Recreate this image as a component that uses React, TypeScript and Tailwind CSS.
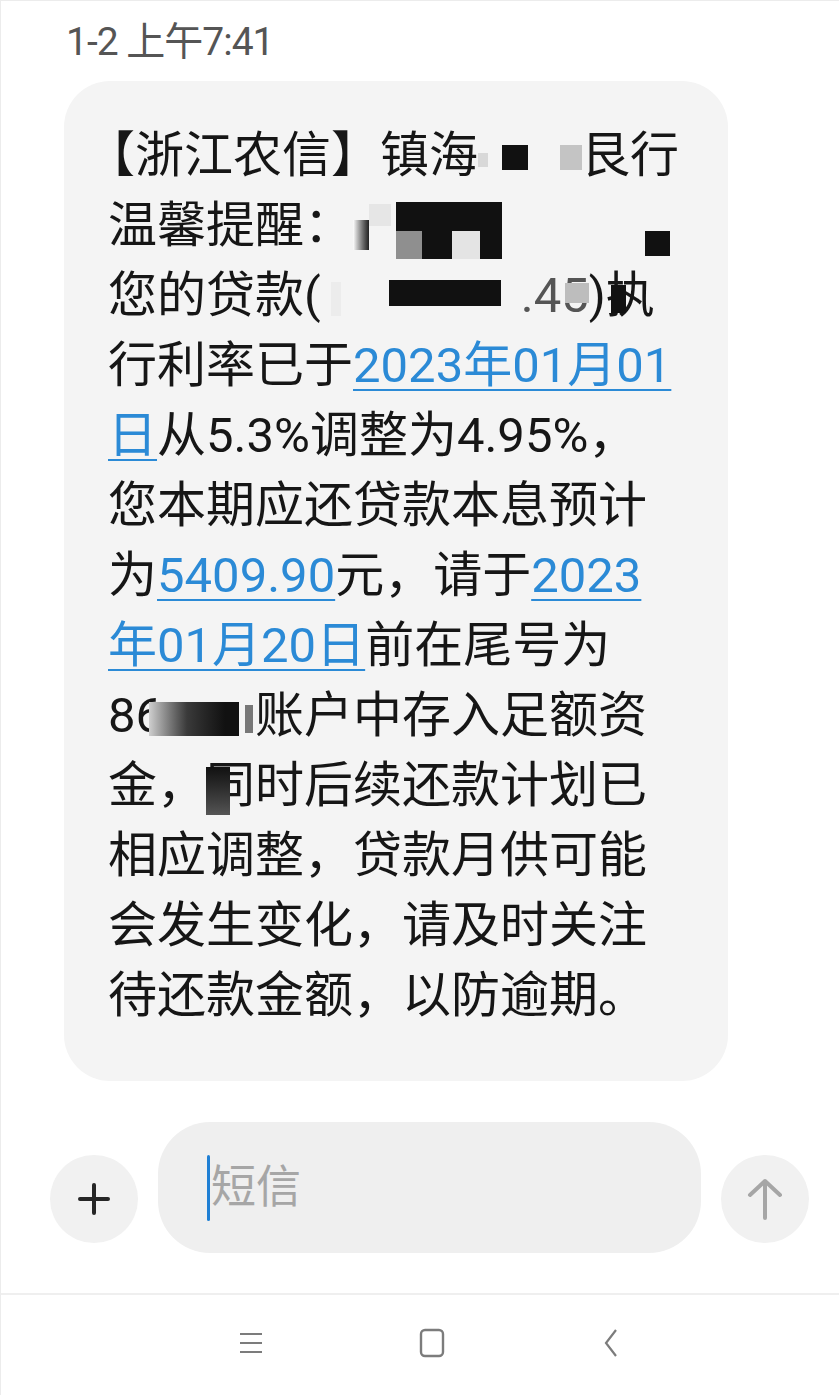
import React from 'react';

const cjk = { fontFamily: "Roboto, 'Noto Sans CJK SC', sans-serif" };

// blue underlined date / amount links in the SMS
const Link = ({ children }: { children: React.ReactNode }) => (
  <span className="text-[#2b8ad6] underline decoration-[#2b8ad6] decoration-2 underline-offset-[7px]">{children}</span>
);

// mosaic piece laid over a glyph
const Cover = ({ className }: { className: string }) => <span className={`absolute ${className}`} />;

const App: React.FC = () => {
  return (
    <div className="w-[839px] h-[1395px] bg-white flex flex-col border-l border-t border-[#ececec] overflow-hidden" style={cjk}>
      {/* timestamp */}
      <div className="pl-[65px] pt-[12px] h-[80px] text-[39px] text-[#555] tracking-[-1px]">1-2 上午7:41</div>

      {/* message bubble */}
      <div className="mx-[63px] w-[664px] rounded-[46px] bg-[#f4f4f4] pl-[44px] pt-[40px] pb-[50px] text-[#161616] text-[49px] leading-[70px]">
        <div className="whitespace-nowrap -ml-[22px]">
          【浙江农信】镇海
          <span className="inline-flex items-start w-[103px] h-[28px] align-middle">
            <span className="shrink-0 w-[10px] h-[14px] bg-[#d8d8d8] mt-[8px]" />
            <span className="shrink-0 w-[26px] h-[25px] bg-[#111] ml-[14px]" />
            <span className="shrink-0 w-[22px] h-[25px] bg-[#c4c4c4] ml-[32px]" />
          </span>
          艮行
        </div>
        <div className="whitespace-nowrap">
          温馨提醒：
          <span className="inline-flex w-[320px] h-[57px] align-[-8px]">
            <span className="shrink-0 w-[16px] h-[30px] mt-[18px] bg-gradient-to-r from-white to-[#222]" />
            <span className="shrink-0 w-[22px] h-[22px] mt-[2px] bg-[#e6e6e6]" />
            <span className="shrink-0 w-[106px] h-[57px] ml-[5px] bg-[#111] flex items-end">
              <span className="w-[26px] h-[28px] bg-[#8f8f8f]" />
              <span className="w-[28px] h-[28px] ml-[30px] bg-[#e4e4e4]" />
            </span>
            <span className="shrink-0 w-[25px] h-[25px] mt-[29px] ml-[143px] bg-[#111]" />
          </span>
        </div>
        <div className="whitespace-nowrap">
          您的贷款(
          <span className="inline-flex items-center w-[200px] h-[40px] align-middle">
            <span className="shrink-0 w-[10px] h-[34px] bg-[#ececec] ml-[10px]" />
            <span className="shrink-0 w-[112px] h-[26px] bg-[#111] ml-[48px] -mt-[12px]" />
          </span>
          <span className="relative text-[#555]">
            .45
            <Cover className="left-[44px] top-[16px] w-[24px] h-[20px] bg-[#bdbdbd]" />
          </span>
          <span className="relative">
            )执
            <Cover className="left-[22px] top-[18px] w-[15px] h-[28px] bg-[#111]" />
          </span>
        </div>
        <div className="whitespace-nowrap">
          行利率已于<Link>2023年01月01</Link>
        </div>
        <div className="whitespace-nowrap">
          <Link>日</Link>从5.3%调整为4.95%，
        </div>
        <div className="whitespace-nowrap">您本期应还贷款本息预计</div>
        <div className="whitespace-nowrap">
          为<Link>5409.90</Link>元，请于<Link>2023</Link>
        </div>
        <div className="whitespace-nowrap">
          <Link>年01月20日</Link>前在尾号为
        </div>
        <div className="whitespace-nowrap">
          86
          <span className="inline-flex items-center w-[94px] h-[34px] align-middle -ml-[14px]">
            <span className="shrink-0 w-[76px] h-[34px] bg-gradient-to-r from-[#cfcfcf] via-[#3a3a3a] to-[#111]" />
            <span className="shrink-0 w-[14px] h-[34px] bg-[#111]" />
            <span className="shrink-0 w-[8px] h-[28px] ml-[6px] bg-[#777]" />
          </span>
          <span className="ml-[12px]">账户中存入足额资</span>
        </div>
        <div className="whitespace-nowrap">
          金，
          <span className="relative">
            同
            <Cover className="left-0 top-[10px] w-[24px] h-[48px] bg-gradient-to-b from-[#111] to-[#555]" />
          </span>
          时后续还款计划已
        </div>
        <div className="whitespace-nowrap">相应调整，贷款月供可能</div>
        <div className="whitespace-nowrap">会发生变化，请及时关注</div>
        <div className="whitespace-nowrap">待还款金额，以防逾期。</div>
      </div>

      {/* input row */}
      <div className="flex items-center mt-[41px] h-[131px] pl-[49px] gap-[20px]">
        <div className="mt-[22px] w-[88px] h-[88px] rounded-full bg-[#f1f1f1] flex items-center justify-center">
          <svg width="38" height="38" viewBox="0 0 38 38">
            <path d="M19 5v28M5 19h28" stroke="#262626" strokeWidth="4" strokeLinecap="round" />
          </svg>
        </div>
        <div className="w-[543px] h-[131px] rounded-[52px] bg-[#efefef] flex items-center pl-[49px]">
          <span className="w-[3px] h-[66px] bg-[#1f7fd4] rounded-sm" />
          <span className="text-[45px] text-[#a6a6a6] ml-[1px]">短信</span>
        </div>
        <div className="mt-[22px] w-[88px] h-[88px] rounded-full bg-[#f1f1f1] flex items-center justify-center">
          <svg width="40" height="44" viewBox="0 0 40 44">
            <path d="M20 41V4M5 18L20 4l15 14" stroke="#a6a6a6" strokeWidth="4" fill="none" strokeLinecap="round" strokeLinejoin="round" />
          </svg>
        </div>
      </div>

      {/* navigation bar */}
      <div className="mt-[40px] border-t-2 border-[#efefef] flex-1 flex items-center justify-center gap-[154px] pl-[20px] pb-[4px]">
        <svg width="26" height="24" viewBox="0 0 26 24">
          <path d="M2 3h22M2 12h22M2 21h22" stroke="#7c7c7c" strokeWidth="2.2" />
        </svg>
        <svg width="28" height="30" viewBox="0 0 28 30">
          <rect x="3" y="2" width="22" height="26" rx="4" stroke="#7c7c7c" strokeWidth="2.4" fill="none" />
        </svg>
        <svg width="22" height="30" viewBox="0 0 22 30">
          <path d="M16 2L6 15l10 13" stroke="#7c7c7c" strokeWidth="2.2" fill="none" />
        </svg>
      </div>
    </div>
  );
};

export default App;
